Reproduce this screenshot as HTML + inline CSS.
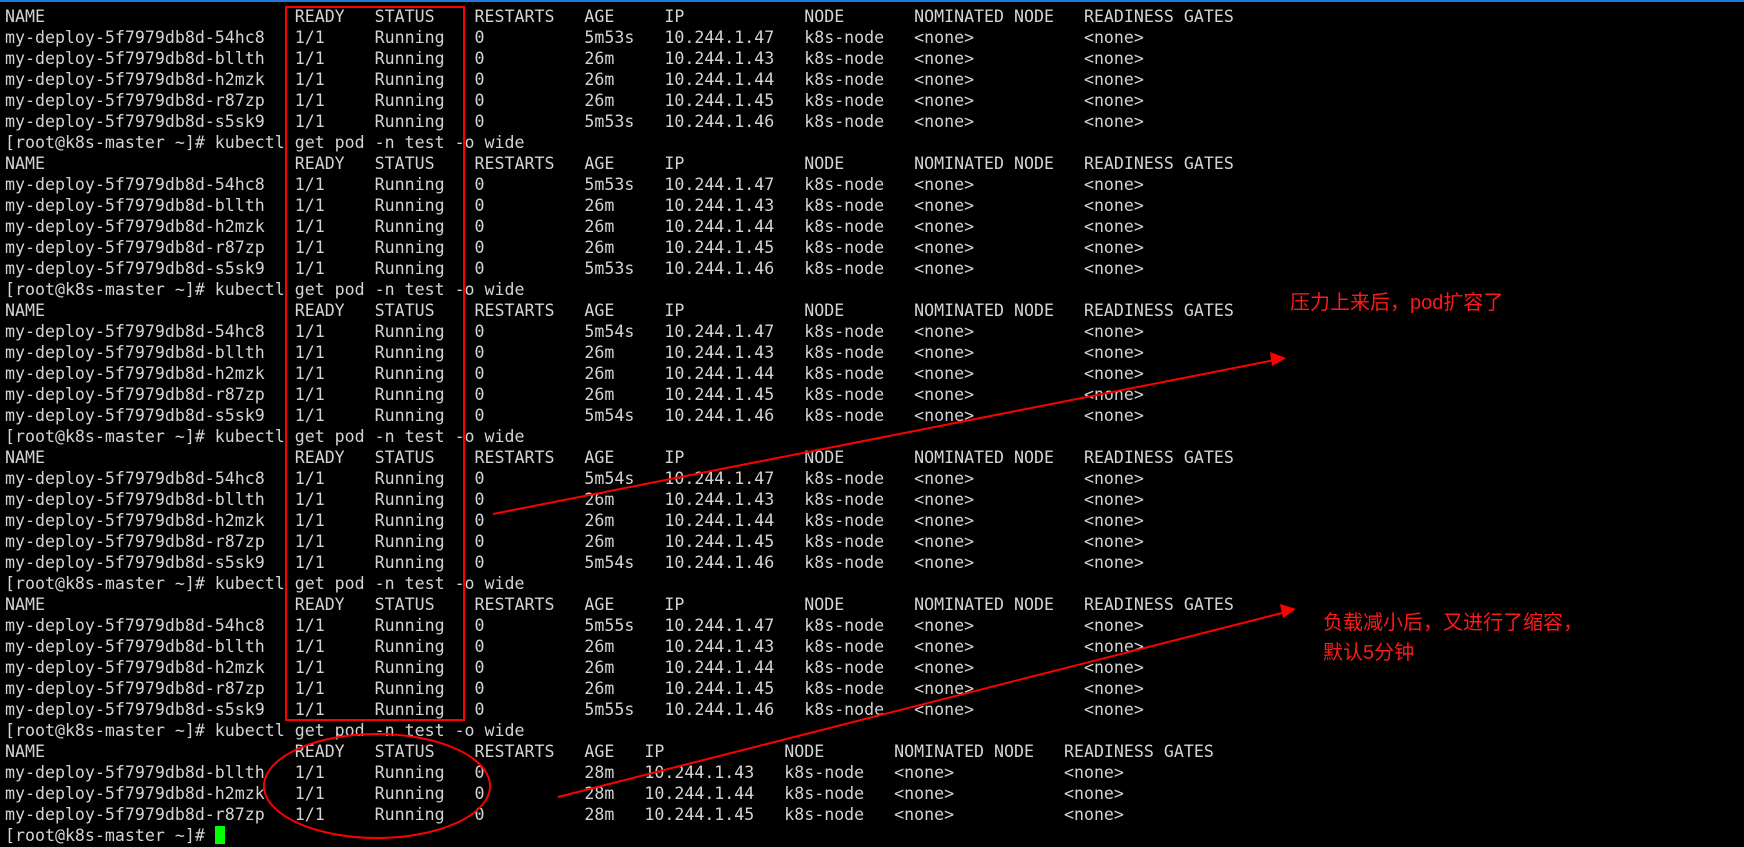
<!DOCTYPE html>
<html><head><meta charset="utf-8"><style>
html,body{margin:0;padding:0;background:#000;width:1744px;height:847px;overflow:hidden;position:relative}
.top{position:absolute;left:0;top:0;width:1744px;height:2px;background:#1c7ed6}
pre{position:absolute;left:5px;top:6px;margin:0;font-family:"DejaVu Sans Mono","Liberation Mono",monospace;font-size:16.6px;line-height:21px;color:#d4d4d4}
.cur{display:inline-block;width:10px;height:18px;background:#00ff00;vertical-align:-3px}
.note{position:absolute;color:#ff1a1a;font-family:"Liberation Sans","Noto Sans CJK SC",sans-serif;font-size:20px;white-space:nowrap}
svg{position:absolute;left:0;top:0}
</style></head><body>
<div class="top"></div>
<pre>NAME                         READY   STATUS    RESTARTS   AGE     IP            NODE       NOMINATED NODE   READINESS GATES
my-deploy-5f7979db8d-54hc8   1/1     Running   0          5m53s   10.244.1.47   k8s-node   &lt;none&gt;           &lt;none&gt;
my-deploy-5f7979db8d-bllth   1/1     Running   0          26m     10.244.1.43   k8s-node   &lt;none&gt;           &lt;none&gt;
my-deploy-5f7979db8d-h2mzk   1/1     Running   0          26m     10.244.1.44   k8s-node   &lt;none&gt;           &lt;none&gt;
my-deploy-5f7979db8d-r87zp   1/1     Running   0          26m     10.244.1.45   k8s-node   &lt;none&gt;           &lt;none&gt;
my-deploy-5f7979db8d-s5sk9   1/1     Running   0          5m53s   10.244.1.46   k8s-node   &lt;none&gt;           &lt;none&gt;
[root@k8s-master ~]# kubectl get pod -n test -o wide
NAME                         READY   STATUS    RESTARTS   AGE     IP            NODE       NOMINATED NODE   READINESS GATES
my-deploy-5f7979db8d-54hc8   1/1     Running   0          5m53s   10.244.1.47   k8s-node   &lt;none&gt;           &lt;none&gt;
my-deploy-5f7979db8d-bllth   1/1     Running   0          26m     10.244.1.43   k8s-node   &lt;none&gt;           &lt;none&gt;
my-deploy-5f7979db8d-h2mzk   1/1     Running   0          26m     10.244.1.44   k8s-node   &lt;none&gt;           &lt;none&gt;
my-deploy-5f7979db8d-r87zp   1/1     Running   0          26m     10.244.1.45   k8s-node   &lt;none&gt;           &lt;none&gt;
my-deploy-5f7979db8d-s5sk9   1/1     Running   0          5m53s   10.244.1.46   k8s-node   &lt;none&gt;           &lt;none&gt;
[root@k8s-master ~]# kubectl get pod -n test -o wide
NAME                         READY   STATUS    RESTARTS   AGE     IP            NODE       NOMINATED NODE   READINESS GATES
my-deploy-5f7979db8d-54hc8   1/1     Running   0          5m54s   10.244.1.47   k8s-node   &lt;none&gt;           &lt;none&gt;
my-deploy-5f7979db8d-bllth   1/1     Running   0          26m     10.244.1.43   k8s-node   &lt;none&gt;           &lt;none&gt;
my-deploy-5f7979db8d-h2mzk   1/1     Running   0          26m     10.244.1.44   k8s-node   &lt;none&gt;           &lt;none&gt;
my-deploy-5f7979db8d-r87zp   1/1     Running   0          26m     10.244.1.45   k8s-node   &lt;none&gt;           &lt;none&gt;
my-deploy-5f7979db8d-s5sk9   1/1     Running   0          5m54s   10.244.1.46   k8s-node   &lt;none&gt;           &lt;none&gt;
[root@k8s-master ~]# kubectl get pod -n test -o wide
NAME                         READY   STATUS    RESTARTS   AGE     IP            NODE       NOMINATED NODE   READINESS GATES
my-deploy-5f7979db8d-54hc8   1/1     Running   0          5m54s   10.244.1.47   k8s-node   &lt;none&gt;           &lt;none&gt;
my-deploy-5f7979db8d-bllth   1/1     Running   0          26m     10.244.1.43   k8s-node   &lt;none&gt;           &lt;none&gt;
my-deploy-5f7979db8d-h2mzk   1/1     Running   0          26m     10.244.1.44   k8s-node   &lt;none&gt;           &lt;none&gt;
my-deploy-5f7979db8d-r87zp   1/1     Running   0          26m     10.244.1.45   k8s-node   &lt;none&gt;           &lt;none&gt;
my-deploy-5f7979db8d-s5sk9   1/1     Running   0          5m54s   10.244.1.46   k8s-node   &lt;none&gt;           &lt;none&gt;
[root@k8s-master ~]# kubectl get pod -n test -o wide
NAME                         READY   STATUS    RESTARTS   AGE     IP            NODE       NOMINATED NODE   READINESS GATES
my-deploy-5f7979db8d-54hc8   1/1     Running   0          5m55s   10.244.1.47   k8s-node   &lt;none&gt;           &lt;none&gt;
my-deploy-5f7979db8d-bllth   1/1     Running   0          26m     10.244.1.43   k8s-node   &lt;none&gt;           &lt;none&gt;
my-deploy-5f7979db8d-h2mzk   1/1     Running   0          26m     10.244.1.44   k8s-node   &lt;none&gt;           &lt;none&gt;
my-deploy-5f7979db8d-r87zp   1/1     Running   0          26m     10.244.1.45   k8s-node   &lt;none&gt;           &lt;none&gt;
my-deploy-5f7979db8d-s5sk9   1/1     Running   0          5m55s   10.244.1.46   k8s-node   &lt;none&gt;           &lt;none&gt;
[root@k8s-master ~]# kubectl get pod -n test -o wide
NAME                         READY   STATUS    RESTARTS   AGE   IP            NODE       NOMINATED NODE   READINESS GATES
my-deploy-5f7979db8d-bllth   1/1     Running   0          28m   10.244.1.43   k8s-node   &lt;none&gt;           &lt;none&gt;
my-deploy-5f7979db8d-h2mzk   1/1     Running   0          28m   10.244.1.44   k8s-node   &lt;none&gt;           &lt;none&gt;
my-deploy-5f7979db8d-r87zp   1/1     Running   0          28m   10.244.1.45   k8s-node   &lt;none&gt;           &lt;none&gt;
[root@k8s-master ~]# <span class="cur"></span></pre>
<svg width="1744" height="847" viewBox="0 0 1744 847">
<rect x="286" y="7" width="178" height="713" fill="none" stroke="#ff0000" stroke-width="2"/>
<ellipse cx="377" cy="786" rx="113" ry="52" fill="none" stroke="#ff0000" stroke-width="2"/>
<line x1="493" y1="514" x2="1280" y2="359" stroke="#ff0000" stroke-width="2"/>
<polygon points="1286,358 1270,352 1272,366" fill="#ff0000"/>
<line x1="558" y1="797" x2="1290" y2="611" stroke="#ff0000" stroke-width="2"/>
<polygon points="1296,609 1280,604 1283,618" fill="#ff0000"/>
</svg>
<div class="note" style="left:1290px;top:286px">压力上来后，pod扩容了</div>
<div class="note" style="left:1323px;top:606px">负载减小后，又进行了缩容，</div>
<div class="note" style="left:1323px;top:636px">默认5分钟</div>
</body></html>
